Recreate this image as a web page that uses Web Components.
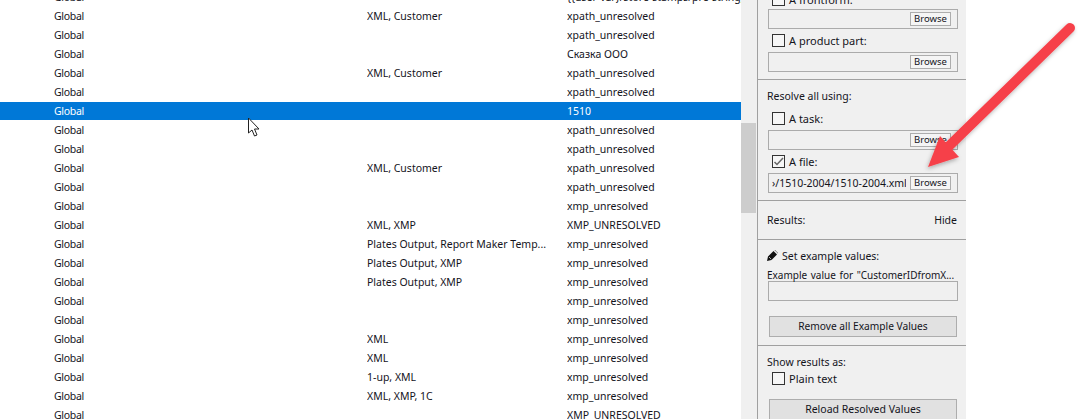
<!DOCTYPE html>
<html><head><meta charset="utf-8">
<style>
html,body{margin:0;padding:0;height:419px;overflow:hidden;background:#fff}
body{font:10.5px/1 "Noto Sans","DejaVu Sans",sans-serif;color:#000}
</style></head><body>
<app-root></app-root>
<script>
const FONT='"Noto Sans","DejaVu Sans",sans-serif';
class ResultRow extends HTMLElement{
  constructor(){super();this.attachShadow({mode:'open'}).innerHTML=`<style>
  :host{display:grid;box-sizing:border-box;grid-template-columns:367px 200px 1fr;height:19px;padding-bottom:1px;align-items:center;font:10.5px ${FONT};color:#14141c;white-space:nowrap}
  :host([selected]){background:linear-gradient(#0078d7,#0078d7) 0 0/100% 18px no-repeat;color:#fff}
  span{display:block;overflow:hidden}
  .a{padding-left:54px;letter-spacing:-.3px}
  </style><span class="a"><slot name="a"></slot></span><span><slot name="b"></slot></span><span><slot name="c"></slot></span>`;}
}
customElements.define('result-row',ResultRow);

class ResultList extends HTMLElement{
  constructor(){super();
    const rows=[
    ['','{{user-var}/store-stamps/pre-string}'],
    ['XML, Customer','xpath_unresolved'],['','xpath_unresolved'],['','Сказка ООО'],['XML, Customer','xpath_unresolved'],['','xpath_unresolved'],['','1510',1],['','xpath_unresolved'],['','xpath_unresolved'],['XML, Customer','xpath_unresolved'],['','xpath_unresolved'],['','xmp_unresolved'],['XML, XMP','XMP_UNRESOLVED'],['Plates Output, Report Maker Temp...','xmp_unresolved'],['Plates Output, XMP','xmp_unresolved'],['Plates Output, XMP','xmp_unresolved'],['','xmp_unresolved'],['','xmp_unresolved'],['XML','xmp_unresolved'],['XML','xmp_unresolved'],['1-up, XML','xmp_unresolved'],['XML, XMP, 1C','xmp_unresolved'],['','XMP_UNRESOLVED']];
    const r=this.attachShadow({mode:'open'});
    r.innerHTML=`<style>:host{display:block;width:741px;height:419px;overflow:hidden;background:#fff;flex:none}
    .in{margin-top:-12px}</style><div class="in">${rows.map(x=>`<result-row ${x[2]?'selected':''}><span slot="a">Global</span><span slot="b">${x[0]}</span><span slot="c">${x[1]}</span></result-row>`).join('')}</div>`;
  }
}
customElements.define('result-list',ResultList);

class ScrollBar extends HTMLElement{
  constructor(){super();this.attachShadow({mode:'open'}).innerHTML=`<style>:host{display:block;width:16px;height:419px;padding-top:123px;box-sizing:border-box;background:#f0f0f0;flex:none}
  .t{height:90px;background:#cdcdcd;width:15px}
  </style><div class="t"></div>`;}
}
customElements.define('scroll-bar',ScrollBar);

class WinCheck extends HTMLElement{
  constructor(){super();this.attachShadow({mode:'open'}).innerHTML=`<style>:host{display:flex;align-items:center;gap:4px;height:16px;padding-left:14px;font:11px ${FONT};color:#14141c;white-space:nowrap}
  .b{width:11px;height:11px;border:1px solid #333;background:#f6f6f6;display:block;position:relative;flex:none}
  svg{display:none;position:absolute;left:0;top:0}
  :host([checked]) svg{display:block}</style><span class="b"><svg width="11" height="11" viewBox="0 0 11 11"><path d="M1.5 6 L4 8.5 L10 2" fill="none" stroke="#666" stroke-width="1.5"/></svg></span><slot></slot>`;}
}
customElements.define('win-check',WinCheck);

class TextField extends HTMLElement{
  constructor(){super();this.attachShadow({mode:'open'}).innerHTML=`<style>:host{display:flex;align-items:center;box-sizing:border-box;width:190px;height:20px;margin-left:10px;border:1px solid #ababab;background:#f0f0f0;padding:0 6px 0 3px;font:10.5px ${FONT};color:#14141c;gap:4px;overflow:hidden}
  .v{flex:1;min-width:0;white-space:nowrap;overflow:hidden;text-align:right}
  </style><span class="v"><slot></slot></span><slot name="action"></slot>`;}
}
customElements.define('text-field',TextField);

class BrowseButton extends HTMLElement{
  constructor(){super();this.attachShadow({mode:'open'}).innerHTML=`<style>:host{display:block;box-sizing:border-box;width:41px;height:14px;border:1px solid #adadad;background:#f5f5f5;text-align:center;font:9.5px/12px ${FONT};color:#14141c;flex:none}</style><slot>Browse</slot>`;}
}
customElements.define('browse-button',BrowseButton);

class PanelSection extends HTMLElement{
  constructor(){super();this.attachShadow({mode:'open'}).innerHTML=`<style>:host{display:block;box-sizing:border-box;border-bottom:1px solid #a0a0a0;font:10.5px ${FONT};color:#14141c}</style><slot></slot>`;}
}
customElements.define('panel-section',PanelSection);

class WideButton extends HTMLElement{
  constructor(){super();this.attachShadow({mode:'open'}).innerHTML=`<style>:host{display:flex;align-items:center;justify-content:center;box-sizing:border-box;width:188px;height:21px;margin-left:11px;padding-bottom:2px;border:1px solid #adadad;background:#e1e1e1;font:10.5px ${FONT};color:#14141c;white-space:nowrap}</style><slot></slot>`;}
}
customElements.define('wide-button',WideButton);

class AppRoot extends HTMLElement{
  constructor(){super();this.attachShadow({mode:'open'}).innerHTML=`<style>
  :host{display:block;width:1078px;height:419px;position:relative;overflow:hidden;background:#fff}
  .wrap{display:flex;height:419px}
  .side{width:209px;height:419px;box-sizing:border-box;background:#f0f0f0;border-left:1px solid #a0a0a0;overflow:hidden;flex:none}
  .top{margin-top:-9px}
  .lab{padding-left:9px;height:15px;display:flex;align-items:center;white-space:nowrap}
  .row{display:flex;justify-content:space-between;padding:0 9px;align-items:center}
  svg.arrow{position:absolute;left:0;top:0;pointer-events:none}
  svg.cur{position:absolute;left:248px;top:117px}
  </style>
  <div class="wrap"><result-list></result-list><scroll-bar></scroll-bar>
  <div class="side"><div class="top">
   <panel-section style="height:89px">
     <win-check>A frontform:</win-check>
     <text-field style="margin-top:2px"><browse-button slot="action"></browse-button></text-field>
     <win-check style="margin-top:3px">A product part:</win-check>
     <text-field style="margin-top:4px"><browse-button slot="action"></browse-button></text-field>
   </panel-section>
   <panel-section style="height:121px;padding-top:8px">
     <div class="lab">Resolve all using:</div>
     <win-check style="margin-top:7px">A task:</win-check>
     <text-field style="margin-top:4px"><browse-button slot="action"></browse-button></text-field>
     <win-check style="margin-top:3px" checked>A file:</win-check>
     <text-field style="margin-top:4px">›/1510-2004/1510-2004.xml<browse-button slot="action"></browse-button></text-field>
   </panel-section>
   <panel-section style="height:39px">
     <div class="row" style="height:38px"><span>Results:</span><span>Hide</span></div>
   </panel-section>
   <panel-section style="height:106px;padding-top:8px">
     <div class="lab" style="gap:4px"><svg width="11" height="11" viewBox="0 0 11 11"><path d="M0 11 L1 6.5 L6.5 1 L10 4.5 L4.5 10 Z M7.5 0 L8 0 L11 3 L11 3.5 Z" fill="#111"/><path d="M2 7 L4.2 9.2" stroke="#f0f0f0" stroke-width=".7"/></svg>Set example values:</div>
     <div class="lab" style="margin-top:4px;font-size:10px;word-spacing:1px">Example value for "CustomerIDfromX...</div>
     <text-field style="margin-top:-1px"></text-field>
     <wide-button style="margin-top:15px;font-size:10.2px">Remove all Example Values</wide-button>
   </panel-section>
   <panel-section style="height:90px;padding-top:8px;border:0">
     <div class="lab">Show results as:</div>
     <win-check style="margin-top:1px">Plain text</win-check>
     <wide-button style="margin-top:13px">Reload Resolved Values</wide-button>
   </panel-section>
  </div></div></div>
  <svg class="cur" width="13" height="21" viewBox="0 0 13 21"><path d="M0.5 1 V16 L4 13 L6.5 19 L9 18 L6.5 12 H11 Z" fill="#fff" stroke="#222" stroke-width="1"/></svg>
  <svg class="arrow" width="1078" height="419"><defs><filter id="s" x="-20%" y="-20%" width="140%" height="140%"><feDropShadow dx="-1" dy="2" stdDeviation="2" flood-color="#000" flood-opacity=".3"/></filter></defs>
  <g filter="url(#s)"><path d="M1070 28 L948 147" stroke="#f6414a" stroke-width="10" stroke-linecap="round" fill="none"/><path d="M928 167 L940 136 L959 157 Z" fill="#f6414a"/></g></svg>`;
  }
}
customElements.define('app-root',AppRoot);
</script></body></html>
